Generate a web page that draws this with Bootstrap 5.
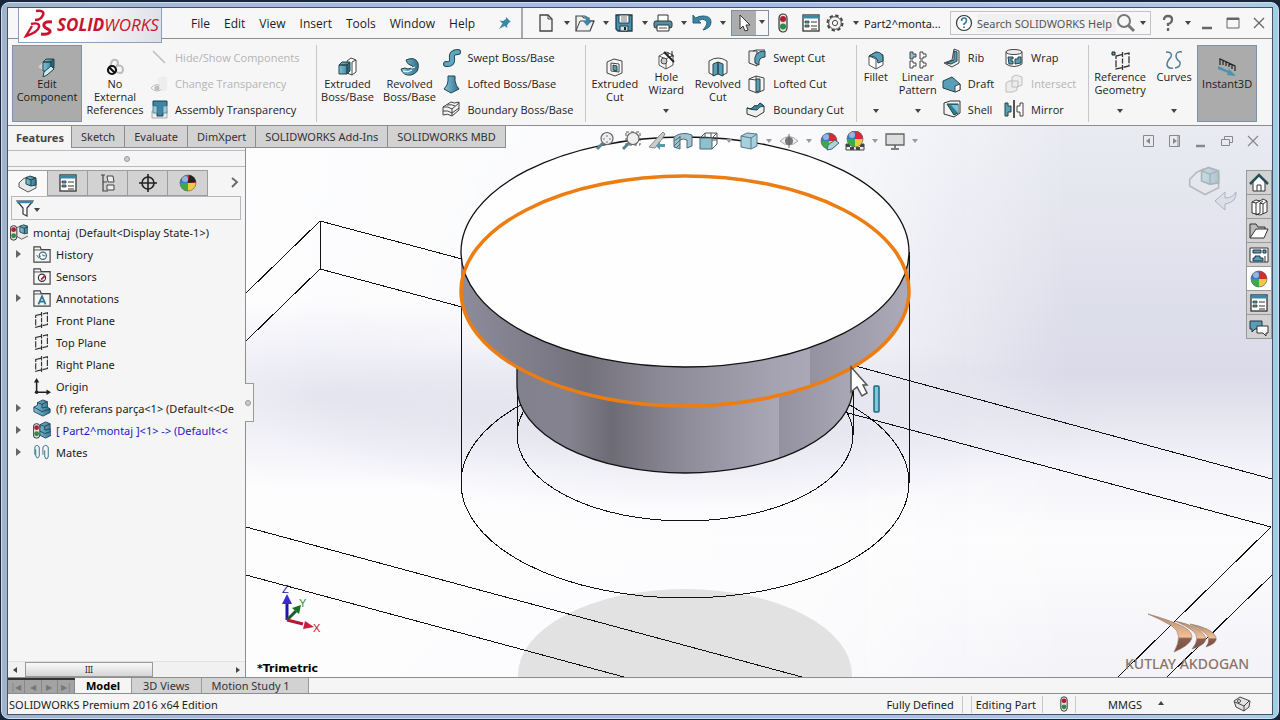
<!DOCTYPE html>
<html lang="en">
<head>
<meta charset="utf-8">
<meta name="viewport" content="width=device-width, initial-scale=1">
<title>SOLIDWORKS Premium 2016</title>
<link href="https://cdn.jsdelivr.net/npm/bootstrap@5.3.0/dist/css/bootstrap.min.css" rel="stylesheet">
<style>
:root{--ink:#1c1c1c;--line:#8b8d92;--face:#f5f5f5;--tab:#d2d2d2;--blue:#5a9db8}
body{font-family:"Open Sans","Noto Sans",sans-serif;font-size:12px;line-height:13px;color:var(--ink);background:#17263a;overflow:hidden}
button,input,select{font:inherit;color:inherit}
button{background:none;border:0;padding:0}
a{color:inherit;text-decoration:none}
svg{flex:none}
.win-frame{padding:4px 5px 3px 5px;margin:2px 1px 1px 1px;min-height:0;border-radius:8px;background:linear-gradient(90deg,#9fb4cc,#a9b9dd 20%,#a5bbe8 60%,#b3c9e6 97%,#9ed0e4);border:1px solid #d3deec}
.win-body{border:1px solid #43536a;background:var(--face);min-height:0}
.title-row{height:31px;border-bottom:1px solid var(--line);background:#f7f7f8;z-index:3}
.brand-box{left:10px;top:0;width:144px;height:35px;background:linear-gradient(100deg,#fff 40%,#dcdfe6);border:1px solid #8ba0bd;border-top:0}
.brand-box svg{margin-left:4px}
.brand-word{font-size:17px;line-height:20px;font-weight:700;font-style:italic;color:#c8142f}
.brand-word span{font-weight:400}
.menu-links{padding-left:183px}
.menu-links a{margin-right:14px}
.quick{border-left:2px solid #a9aaad;padding-left:13px}
.quick .tri{margin-right:1px}
.small-face,.find-box input,.tab-strip,.low-tabs,.status-row,.tree-pane{font-family:"Noto Sans","Open Sans",sans-serif;font-size:11px}
.tri{width:0;height:0;border:3px solid transparent;border-top:4px solid #444;border-bottom:0;display:inline-block}
.tri.up{border-top:0;border-bottom:4px solid #444}
.tri.faint{border-top-color:#999}
.tri.to-left{rotate:90deg}
.tri.to-right{rotate:-90deg}
.sel-tool{border:1px solid #7d8ea4;height:26px}
.sel-tool .on{background:#adadad;width:24px;height:24px}
.sel-tool .more{width:12px}
.find-box{border:1px solid #c0c3c9;background:#f7f7f8;height:24px;width:201px}
.find-box input{border:0;background:#f0f0f1;width:139px;min-width:0;padding:0;color:#555;height:18px}
.find-box input::placeholder{color:#555;opacity:1}
.ribbon-row{height:87px;border-bottom:1px solid var(--line);padding:6px 0 3px 4px;background:#f6f6f7;font-size:11px}
.group{border-right:1px solid #c4c6ca;padding-right:12px}
.tool{display:flex;flex-direction:column;align-items:center;padding-top:12px;text-align:center;position:relative}
.tool.drop{padding-top:5px}
.tool.drop .tri{position:absolute;bottom:9px}
.tool.on{background:#ababab;border:1px solid #7c93ac;padding-top:11px}
.w-a{width:70px}.w-b{width:66px}.w-c{width:62px}.w-d{width:57px}.w-e{width:46px}.w-f{width:38px}.w-g{width:60px}
.pile{display:flex;flex-direction:column}
.pile+.pile{margin-left:10px}
.pile button{display:flex;align-items:center;gap:7px;height:26px;white-space:nowrap}
.off{color:#b4b4b4}.off svg{opacity:.35}
.top-strip{height:22px}
.tab-strip button{height:22px;padding:0 9px;background:var(--tab);border:1px solid var(--line);border-left:0;border-top:0;color:#333}
.tab-strip button.on{background:var(--face);border:0;border-right:1px solid var(--line);font-weight:700;color:#444;padding:0 8px;width:64px}
.heads-up{margin-left:86px;margin-top:5px}
.doc-ctl{margin-top:8px;padding-right:6px}
.stage{min-height:0;background:#fdfdfe}
.scene{inset:0;z-index:0}
.over{z-index:1}
.tree-pane{width:238px;background:var(--face);border-right:1px solid var(--line);z-index:1}
.grip{height:17px;margin-top:2px;border-top:1px solid #b9bbbf;border-bottom:1px solid #b9bbbf}
.dot{width:6px;height:6px;border-radius:50%;background:#ccc;border:1px solid #999}
.pane-tabs{margin-top:3px;height:26px}
.pane-tabs button{width:40px;background:var(--tab);border:1px solid #9b9ca0;border-left:0}
.pane-tabs .on{background:#f9f9fa;border-bottom:0}
.filter-box{height:24px;margin:0 4px 1px 3px;border:1px solid #b6b8bc}
.tree-pane li{height:22px;display:flex;align-items:center;white-space:nowrap;overflow:hidden;margin-right:3px}
.tree-pane li svg{margin-right:5px}
.tree-pane li .root-pic{margin:0 5px 0 2px}
.tree-pane .editing{color:#1c18c4}
.tw{width:25px;padding-left:8px;flex:none;display:flex}
.tw i{border:4px solid transparent;border-left:5px solid #666;border-right:0}
.hbar{height:16px;background:#f1f1f1;border-top:1px solid #e1e1e1}
.thumb{width:128px;height:15px;margin-left:7px;border:1px solid #999;background:linear-gradient(#fafafa,#d5d5d5);font-size:8px}
.pull{left:237px;top:257px;width:9px;height:39px;background:var(--face);border:1px solid #999;border-left:0;z-index:2}
.doc-ctl button,.caption button{width:26px;display:flex;justify-content:center}
.caption .tri{margin:0 3px 0 4px}
.task-pane{right:0;top:44px;width:26px;z-index:1;background:var(--tab);border:1px solid #999;border-bottom:0}
.task-pane button{height:24px;width:100%;display:flex;align-items:center;justify-content:center;border-bottom:1px solid #999}
.view-name{left:249px;bottom:2px;z-index:1;font-weight:700;font-size:11px;font-family:"DejaVu Sans",sans-serif;color:#000}
.low-tabs{height:17px;border-top:1px solid var(--line);border-bottom:1px solid var(--line)}
.low-tabs button{border-right:1px solid #999;background:var(--tab);color:#333;padding:0 11px}
.low-tabs button:last-child{padding:0 18px 0 10px}
.low-tabs button.on{background:var(--face);font-weight:700;color:#000;border-right:1px solid #999}
.reel{width:67px;background:#a3a3a3;border-top:2px solid #333;font-size:8px;color:#777}
.reel span{border-right:1px solid #888;flex:1;text-align:center}
.status-row{height:20px;padding-left:1px}
.cell{border-right:1px solid #c9c9c9;height:17px;display:flex;align-items:center}
.cell-lead{border-left:1px solid #c9c9c9;margin-left:8px;padding:0 6px 0 4px}
.cell-light{padding:0 3px 0 13px}
.tag-pic{margin:0 21px 0 69px}
</style>
</head>
<body class="vh-100 d-flex flex-column">
<svg width="0" height="0" class="position-absolute" aria-hidden="true">
<defs>
<linearGradient id="teal" x1="0" x2="1"><stop offset="0" stop-color="#82c4dc"/><stop offset="1" stop-color="#34718c"/></linearGradient>
<g id="ball"><circle cx="10" cy="10" r="8" fill="#ddd"/><path d="M10 10V2a8 8 0 0 0-8 8z" fill="#3c78c8"/><path d="M10 10V2a8 8 0 0 1 8 8z" fill="#d52b35"/><path d="M10 10H2a8 8 0 0 0 8 8z" fill="#3bab4a"/><path d="M10 10v8a8 8 0 0 0 8-8z" fill="#ecca42"/><circle cx="7" cy="6" r="3" fill="#fff" opacity=".45"/><circle cx="10" cy="10" r="8" fill="none" stroke="#555" stroke-width=".6"/></g>
<g id="light"><rect x="6" y="1" width="8" height="18" rx="4" fill="#e5e5e5" stroke="#333" stroke-width="1.2"/><circle cx="10" cy="6" r="3" fill="#b01f33"/><circle cx="10" cy="13.500" r="3" fill="#2f8a49"/></g>
<g id="box"><path d="M3 6l7-4 7 3v10l-7 4-7-4z" fill="#fff" stroke="#555"/><path d="M3 6l7 3 7-4M10 9v10" fill="none" stroke="#555"/></g>
<g id="cube"><path d="M2 7l3-3h8l-3 3zM2 7h8v9H2z" fill="url(#teal)" stroke="#244"/><path d="M10 7l3-3v9l-3 3z" fill="#2c6680" stroke="#244"/></g>
<g id="plane" fill="none" stroke="#333" stroke-width="1.300"><path d="M3 5l13-3v13L3 18z" stroke-dasharray="7 1.300"/><path d="M9.500 1v18" stroke-dasharray="5 1.500"/></g>
<g id="folder"><path d="M1 2h7l1 3h10v14H1z" fill="#f5f5f5" stroke="#444" stroke-width="1.300"/><path d="M1 5.500h18" stroke="#444"/></g>
<g id="part"><path d="M1 9l4-2V4l6-3 5 2v6l3 2v4l-8 4-10-5z" fill="url(#teal)" stroke="#1e4455"/><path d="M1 9l9 5 9-3M5 4l5 2 6-3M10 6v4l6-1" fill="none" stroke="#1e4455"/></g>
<g id="assy"><path d="M1 9l4-4 4-2 9 3v8l-8 4-9-5z" fill="#e9e9e9" stroke="#555"/><path d="M8 4l4-2 6 2v7l-5 1-5-2z" fill="url(#teal)" stroke="#244"/><path d="M8 4l5 2 5-2M13 6v6" fill="none" stroke="#244"/></g>
<g id="props"><rect x="2" y="2" width="16" height="16" fill="#fff" stroke="#333" stroke-width="1.300"/><path d="M2 4h16" stroke="#3b87a5" stroke-width="3"/><path d="M4 8h4v2H4zM4 12h4v2H4z" fill="#5a9db8" stroke="#333" stroke-width=".8"/><path d="M10 9h6M10 13h6M10 16h6" stroke="#333"/></g>
<g id="mag"><circle cx="12" cy="7.500" r="6" fill="#eee" stroke="#666" stroke-width="1.200"/><path d="M8 12l-6 6" stroke="#5b8290" stroke-width="3"/></g>
<g id="cutbox"><path d="M2 5l7-3 8 2v12l-7 3-8-3z" fill="#f5f5f5" stroke="#444"/></g>
</defs></svg>

<div class="win-frame flex-grow-1 d-flex flex-column">
<div class="win-body flex-grow-1 d-flex flex-column">

<header class="title-row d-flex align-items-center position-relative">
 <div class="brand-box position-absolute d-flex align-items-center">
  <svg width="34" height="32" viewBox="0 0 34 32"><g fill="none" stroke="#c8142f"><path d="M13 2q9-1 7 4t-8 5" stroke-width="2.500"/><path d="M8 15q9-2 8 3T3 27l6-10" stroke-width="2.400"/><path d="M29 13q-9-1-8 4c1 3 7 3 6 6q-2 3-9 2" stroke-width="3"/></g></svg>
  <span class="brand-word">SOLID<span>WORKS</span></span>
 </div>
 <nav class="menu-links d-flex"><a href="#">File</a><a href="#">Edit</a><a href="#">View</a><a href="#">Insert</a><a href="#">Tools</a><a href="#">Window</a><a href="#">Help</a></nav>
 <svg class="ms-2 me-2" width="16" height="16" viewBox="0 0 16 16"><path d="M9 2l5 5-2 .4-2 3 .5 2.600-3-2L2 14l3.500-5.500-3-3 3.500.500 3-2z" fill="#3b87a5"/></svg>
 <div class="quick d-flex align-items-center align-self-stretch gap-1 flex-grow-1">
  <button aria-label="New"><svg width="20" height="20" viewBox="0 0 20 20"><path d="M4 2h8l4 4v12H4z" fill="#f4f4f4" stroke="#444" stroke-width="1.300"/><path d="M12 2v4h4" fill="none" stroke="#444"/></svg></button><i class="tri ms-1"></i>
  <button aria-label="Open"><svg width="20" height="20" viewBox="1 0 20 20"><path d="M2 3h6l2 2h5v3h5l-4 10H2z" fill="#f0f0f0" stroke="#444" stroke-width="1.200"/><path d="M2 18L6 8h14" fill="none" stroke="#444"/><path d="M8 2q7 0 7 6h3l-5 5-4-5h3q0-4-4-6z" fill="#3b87a5"/></svg></button><i class="tri ms-1"></i>
  <button aria-label="Save"><svg width="20" height="20" viewBox="0 0 20 20"><path d="M2 2h16v16H4l-2-2z" fill="#4a93af" stroke="#1f3c4a" stroke-width="1.300"/><path d="M5 2h10v8H5z" fill="#fff" stroke="#1f3c4a"/><path d="M7 4h6M7 6h6M7 8h6" stroke="#777"/><path d="M6 13h8v5H6z" fill="#ddd" stroke="#1f3c4a"/><path d="M11 14v3" stroke="#222" stroke-width="2"/></svg></button><i class="tri ms-1"></i>
  <button aria-label="Print"><svg width="20" height="20" viewBox="0 0 20 20"><path d="M5 8V2h10v6" fill="#fff" stroke="#333"/><rect x="1" y="8" width="18" height="7" rx="2" fill="#4a93af" stroke="#333"/><path d="M4 12h12v6H4z" fill="#fff" stroke="#333"/><path d="M6 15h8" stroke="#555"/></svg></button><i class="tri ms-1"></i>
  <button aria-label="Undo"><svg width="20" height="20" viewBox="0 0 20 20"><path d="M1 2v8h8L6 7.500q5-2.500 8 0t-3 9.500q8-2 8-8t-8-6q-4 0-7.500 2z" fill="#3b87a5" stroke="#285e74"/></svg></button><i class="tri ms-1"></i>
  <div class="sel-tool d-flex"><button class="on" aria-label="Select"><svg width="20" height="20" viewBox="0 0 20 20"><path d="M6 2v14l3-3 2 5 3-1-2-5h4z" fill="#fff" stroke="#333"/></svg></button><button class="more" aria-label="Select options"><i class="tri me-0 mb-1"></i></button></div>
  <button aria-label="Rebuild"><svg width="20" height="20" viewBox="0 0 20 20"><use href="#light"/></svg></button>
  <button class="ms-1" aria-label="File properties"><svg width="20" height="20" viewBox="0 0 20 20"><use href="#props"/></svg></button>
  <button aria-label="Options"><svg width="20" height="20" viewBox="0 0 20 20"><circle cx="10" cy="10" r="7.500" fill="none" stroke="#444" stroke-width="2" stroke-dasharray="3.400 2.490"/><circle cx="10" cy="10" r="6.300" fill="#f4f4f4" stroke="#444"/><circle cx="10" cy="10" r="2.600" fill="#fff" stroke="#444"/></svg></button><i class="tri ms-1"></i>
  <span class="small-face">Part2^monta...</span>
  <label class="find-box d-flex align-items-center ms-auto">
   <svg class="mx-1" width="18" height="18" viewBox="0 0 18 18"><circle cx="9" cy="9" r="7.500" fill="#fff" stroke="#333" stroke-width="1.200"/><path d="M6.500 7q0-3 2.500-3t2.500 2.300T9 10v1M9 12.500V14" fill="none" stroke="#2f7f9d" stroke-width="1.700"/></svg>
   <input type="text" placeholder="Search SOLIDWORKS Help" aria-label="Search SOLIDWORKS Help">
   <svg width="20" height="20" viewBox="0 0 20 20"><circle cx="8" cy="8" r="6" fill="none" stroke="#777" stroke-width="2"/><path d="M12 12l6 6" stroke="#777" stroke-width="3"/></svg><i class="tri me-0 ms-1"></i>
  </label>
  <div class="caption d-flex align-items-center">
   <button aria-label="Help"><svg width="14" height="18" viewBox="0 0 14 18"><path d="M3 6q0-4 4-4t4 3.500T7 10v2M7 14v3" fill="none" stroke="#666" stroke-width="2.300"/></svg></button><i class="tri"></i>
   <button aria-label="Minimize"><svg width="14" height="14"><path d="M2 12h10" stroke="#666" stroke-width="2.500"/></svg></button>
   <button aria-label="Maximize"><svg width="14" height="14"><path d="M1 2h12v10H1z" fill="none" stroke="#666"/><path d="M1 3h12" stroke="#666" stroke-width="2"/></svg></button>
   <button aria-label="Close"><svg width="14" height="14"><path d="M2 2l10 10M12 2L2 12" stroke="#666" stroke-width="1.300"/></svg></button>
  </div>
 </div>
</header>

<section class="ribbon-row d-flex align-items-stretch" aria-label="Features toolbar">
 <div class="group d-flex">
  <button class="tool on w-a"><svg class="pic" width="20" height="20" viewBox="0 0 20 20"><path d="M1 10l5-5v8z" fill="#ddd" opacity=".7"/><g transform="translate(4 -2)"><use href="#cube"/></g><path d="M6 20l1-5 7-6 3 3-7 6z" fill="#cfe9f2" stroke="#244"/></svg>Edit<br>Component</button>
  <button class="tool w-b"><svg class="pic" width="20" height="20" viewBox="0 0 20 20"><path d="M6 8q0-6 5-5 4 2 0 7M11 9q7-2 7 4-1 5-6 2" fill="none" stroke="#bbb" stroke-width="2"/><circle cx="7" cy="13" r="4" fill="#fff" stroke="#111" stroke-width="2.200"/><path d="M4 10l6 6" stroke="#111" stroke-width="2.200"/></svg>No<br>External<br>References</button>
  <div class="pile pe-1">
   <button class="off" disabled><svg width="20" height="20" viewBox="0 0 20 20"><path d="M5 3l12 12" stroke="#555" stroke-width="1.500"/></svg>Hide/Show Components</button>
   <button class="off" disabled><svg width="20" height="20" viewBox="0 0 20 20"><path d="M3 14q6-7 12 0-6 6-12 0z" fill="#fff" stroke="#555"/><circle cx="9" cy="14" r="2.500" fill="#555"/><path d="M9 5l6-3 4 2v12l-4 2" fill="#ddd"/></svg>Change Transparency</button>
   <button><svg width="20" height="20" viewBox="0 0 20 20"><path d="M4 12h15v7H4z" fill="#eee" stroke="#aaa"/><path d="M5 2h14v5h-4v10H9V7H5z" fill="#3b87a5" stroke="#1c3f4e"/><path d="M5 7h4v7H5zM15 7h4v7h-4z" fill="#9ccadb" stroke="#5a8ea2"/></svg>Assembly Transparency</button>
  </div>
 </div>
 <div class="group d-flex">
  <button class="tool w-c"><svg class="pic" width="20" height="20" viewBox="0 0 20 20"><path d="M9 4l4-3 5 2v12l-4 3-5-2z" fill="#fff" stroke="#444"/><path d="M14 5l4-2M14 5v13" stroke="#444"/><use href="#cube" transform="translate(-1 1)"/></svg>Extruded<br>Boss/Base</button>
  <button class="tool w-c"><svg class="pic" width="20" height="20" viewBox="0 0 20 20"><path d="M6 3q9-4 12 3 2 10-7 12Q3 19 1 12l4-1q3 2 6 0 4-2-1-3-3-1-4-5z" fill="url(#teal)" stroke="#244"/><path d="M5 6l7 5 3-1M3 14q5 2 9-1" fill="none" stroke="#fff"/></svg>Revolved<br>Boss/Base</button>
  <div class="pile">
   <button><svg width="20" height="20" viewBox="-1 0 20 20"><path d="M4 16q7 1 6-6-1-6 6-6" fill="none" stroke="#214656" stroke-width="6" stroke-linecap="round"/><path d="M4 16q7 1 6-6-1-6 6-6" fill="none" stroke="#5da7c2" stroke-width="4" stroke-linecap="round"/></svg>Swept Boss/Base</button>
   <button><svg width="20" height="20" viewBox="-1 0 20 20"><path d="M6 2h7v5q1 5 4 8l-8 4-7-4q4-4 4-8z" fill="url(#teal)" stroke="#214656"/></svg>Lofted Boss/Base</button>
   <button><svg width="20" height="20" viewBox="0 0 20 20"><path d="M2 8l8-5q3 2 8 0v8l-7 6q-4-3-9-1z" fill="#f3f3f3" stroke="#444"/><path d="M2 8q5-1 9 2l7-6M11 10v7M6 6q5-1 8 1M2 12q5-1 9 2l7-5" fill="none" stroke="#444"/></svg>Boundary Boss/Base</button>
  </div>
 </div>
 <div class="group d-flex">
  <button class="tool w-d"><svg class="pic" width="20" height="20" viewBox="0 0 20 20"><use href="#cutbox"/><path d="M6 6l8 1v8l-8-1z" fill="#fff" stroke="#444"/><path d="M8 8l4 1v5l-4-1z" fill="#5a9db8" stroke="#244"/></svg>Extruded<br>Cut</button>
  <button class="tool drop w-e"><svg class="pic" width="20" height="20" viewBox="0 0 20 20"><use href="#box"/><circle cx="8" cy="11" r="3" fill="#ccc" stroke="#444"/><path d="M8 2l10 10" stroke="#222" stroke-width="2"/><path d="M12 2v3M16 1v4M18 6h-3" stroke="#222"/></svg>Hole<br>Wizard<i class="tri"></i></button>
  <button class="tool w-d"><svg class="pic" width="20" height="20" viewBox="0 0 20 20"><path d="M1 4q9-6 18 0v12l-4 2-5-9-5 9-4-2z" fill="#f6f6f6" stroke="#444"/><path d="M5 7l5-2v12l-5 2zM15 7l-5-2v12l5 2z" fill="#5a9db8" stroke="#244"/></svg>Revolved<br>Cut</button>
  <div class="pile">
   <button><svg width="20" height="20" viewBox="-1 0 20 20"><path d="M2 3h8v15l-8-3z" fill="#eee" stroke="#444"/><path d="M18 3q-12 0-10 12l4 2q-1-8 6-8z" fill="#5a9db8" stroke="#244"/><path d="M6 3l3-1h9" fill="none" stroke="#444"/></svg>Swept Cut</button>
   <button><svg width="20" height="20" viewBox="-1 0 20 20"><use href="#cutbox"/><path d="M9 5h4v12l-4 1z" fill="#5a9db8" stroke="#244"/><path d="M2 5l7 1M9 5V2" stroke="#444" fill="none"/></svg>Lofted Cut</button>
   <button><svg width="20" height="20" viewBox="0 0 20 20"><path d="M1 9q5 2 7-2 4 1 6-3l4 3v6l-8 5-9-3z" fill="#eee" stroke="#333"/><path d="M1 9q5 2 7-2 4 1 6-3l4 3q-5 0-7 4-5 0-10-2z" fill="#3b87a5" stroke="#244"/></svg>Boundary Cut</button>
  </div>
 </div>
 <div class="group d-flex">
  <button class="tool drop w-f"><svg class="pic" width="20" height="20" viewBox="0 0 20 20"><use href="#box"/><path d="M3 6l7-4q8 0 7 9l-5 2q0-7-9-7z" fill="#5a9db8" stroke="#244"/></svg>Fillet<i class="tri"></i></button>
  <button class="tool drop w-e"><svg class="pic" width="20" height="20" viewBox="0 0 20 20"><g fill="#fff" stroke="#444"><path d="M2 2h3v2h3v3H5v2H2z" fill="#8fc0d2"/><path d="M12 2h3v2h3v3h-3v2h-3zM2 11h3v2h3v3H5v2H2zM12 11h3v2h3v3h-3v2h-3z"/></g></svg>Linear<br>Pattern<i class="tri"></i></button>
  <div class="pile">
   <button><svg width="20" height="20" viewBox="-1 0 20 20"><path d="M12 1l5 2v12l-7 4-8-4 8-3z" fill="#eee" stroke="#444"/><path d="M12 3v9l-8 3 5 1 6-3V4z" fill="#5a9db8" stroke="#244"/></svg>Rib</button>
   <button><svg width="20" height="20" viewBox="-1 0 20 20"><path d="M1 7l9-4 8 7v6l-5 2-12-4z" fill="#5a9db8" stroke="#244"/><path d="M13 12l5-2v6l-5 2z" fill="#fff" stroke="#444"/></svg>Draft</button>
   <button><svg width="20" height="20" viewBox="-1 0 20 20"><path d="M2 4l6-2h10v12l-6 4-10-3z" fill="#f2f2f2" stroke="#333"/><path d="M5 5h11v9l-4 2z" fill="#2e7d91" stroke="#244"/><path d="M9 6h7v8z" fill="#7cc4d4"/></svg>Shell</button>
  </div>
  <div class="pile">
   <button><svg width="20" height="20" viewBox="0 0 20 20"><path d="M2 4v12q8 5 16 0V4" fill="#fff" stroke="#444"/><ellipse cx="10" cy="4" rx="8" ry="2.500" fill="#eee" stroke="#444"/><path d="M4 9h5v2H7v2h2v3H5zM11 11h3V9h3v6l-6 1z" fill="#5a9db8" stroke="#244"/></svg>Wrap</button>
   <button class="off" disabled><svg width="20" height="20" viewBox="0 0 20 20"><path d="M2 9l3-2h3V3l4-2 6 2v8l-5 2v3l-4 2H2z" fill="#ddd" stroke="#555"/><path d="M8 7h6v6H8z" fill="none" stroke="#555"/></svg>Intersect</button>
   <button><svg width="20" height="20" viewBox="0 0 20 20"><path d="M1 4h3v3h3v6H4v4H1z" fill="#5a9db8" stroke="#244"/><path d="M19 4h-3v3h-3v6h3v4h3z" fill="#fff" stroke="#444"/><path d="M10 1v18" stroke="#111" stroke-width="1.400"/></svg>Mirror</button>
  </div>
 </div>
 <div class="d-flex">
  <button class="tool drop w-c"><svg class="pic" width="20" height="20" viewBox="0 0 20 20"><use href="#plane" transform="translate(3 1)"/><path d="M2 2h3v3H2z" fill="#5a9db8" stroke="#222"/></svg>Reference<br>Geometry<i class="tri"></i></button>
  <button class="tool drop w-e"><svg class="pic" width="20" height="20" viewBox="0 0 20 20"><path d="M2 2q7 0 5 5-4 4-4 8 1 4 6 3M18 2q-6-1-6 4 0 3 4 6 1 5-5 6" fill="none" stroke="#4f7f98" stroke-width="1.500"/></svg>Curves<i class="tri"></i></button>
  <button class="tool on w-g"><svg class="pic" width="20" height="20" viewBox="0 0 20 20"><path d="M3 8V2l15 7v5M6 4v4M9 5v4M12 6v4M15 8v4" fill="none" stroke="#222" stroke-width="1.200"/><path d="M1 9l11 5-1-3 8 8-9-1 1-2L1 12z" fill="#4a93af"/></svg>Instant3D</button>
 </div>
</section>

<main class="stage flex-grow-1 position-relative d-flex flex-column">
 <svg class="scene position-absolute w-100 h-100" viewBox="8 126 1264 551" preserveAspectRatio="xMinYMin slice" role="img" aria-label="Model view">
  <defs>
   <linearGradient id="sky" x1="0" y1="0" x2="0" y2="1"><stop offset="0" stop-color="#e9ebf1"/><stop offset=".45" stop-color="#dadae9"/><stop offset=".62" stop-color="#f3f3f9"/><stop offset=".75" stop-color="#fcfcfd"/><stop offset="1" stop-color="#f3f3f8"/></linearGradient>
   <linearGradient id="fade" x1="0" x2="1"><stop offset="0" stop-color="#fff" stop-opacity="0"/><stop offset=".55" stop-color="#fff" stop-opacity=".15"/><stop offset=".8" stop-color="#fff" stop-opacity="1"/></linearGradient>
   <mask id="m"><rect x="246" y="126" width="1026" height="551" fill="url(#fade)"/></mask>
   <radialGradient id="haze"><stop offset="0" stop-color="#d6d6e8"/><stop offset="1" stop-color="#d6d6e8" stop-opacity="0"/></radialGradient>
   <linearGradient id="steelA" gradientUnits="userSpaceOnUse" x1="461" x2="909" y1="0" y2="0"><stop offset="0" stop-color="#8e8c9b"/><stop offset=".28" stop-color="#73717c"/><stop offset=".45" stop-color="#8d8a97"/><stop offset=".7" stop-color="#a5a2b1"/><stop offset=".78" stop-color="#aaa7b6"/><stop offset=".78" stop-color="#9491a0"/><stop offset="1" stop-color="#adabb9"/></linearGradient>
   <linearGradient id="steelB" gradientUnits="userSpaceOnUse" x1="517" x2="853" y1="0" y2="0"><stop offset="0" stop-color="#82808d"/><stop offset=".15" stop-color="#85838f"/><stop offset=".28" stop-color="#6d6b75"/><stop offset=".5" stop-color="#8f8c9a"/><stop offset=".78" stop-color="#aaa7b7"/><stop offset=".78" stop-color="#93909f"/><stop offset="1" stop-color="#aaa7b6"/></linearGradient>
   <linearGradient id="bronze" x1="0" y1="0" x2="0" y2="1"><stop offset="0" stop-color="#b58a6d"/><stop offset=".6" stop-color="#f0c196"/><stop offset=".65" stop-color="#8b5f4d"/><stop offset="1" stop-color="#76503d"/></linearGradient>
  </defs>
  <rect x="8" y="126" width="1264" height="551" fill="#fdfdfe"/>
  <rect x="246" y="126" width="1026" height="551" fill="url(#sky)" mask="url(#m)"/>
  <ellipse cx="330" cy="395" rx="340" ry="95" fill="url(#haze)" opacity=".6"/>
  <ellipse cx="690" cy="420" rx="420" ry="90" fill="url(#haze)" opacity=".8"/>
  <ellipse cx="685" cy="675" rx="167" ry="86" fill="#e2e2e3"/>
  <g fill="none" stroke="#111" shape-rendering="crispEdges">
   <path d="M246 293l74-72 142 38M320 221v48M246 341l74-72 142 38M848 364l424 115M848 413l423 114-153 150M1272 575l-105 102M246 527l556 150M246 575l378 102"/>
   <ellipse cx="685" cy="483" rx="224" ry="115"/><ellipse cx="685" cy="435" rx="168" ry="86"/>
   <path d="M461 252v231M909 252v231M517 387v48M853 387v48"/>
  </g>
  <path d="M517 340v47a168 86 0 0 0 336 0v-47z" fill="url(#steelB)" stroke="#111" stroke-width="1.300"/>
  <path d="M461 252v39a224 115 0 0 0 448 0v-39z" fill="url(#steelA)"/>
  <ellipse cx="685" cy="252" rx="224" ry="115" fill="#fefefe" stroke="#111" stroke-width="1.300"/>
  <ellipse cx="685" cy="291" rx="224" ry="115" fill="none" stroke="#ec7d13" stroke-width="3.500"/>
  <path d="M851 367v25l6-5 5 9 5-3-4-8h4z" fill="#fff" stroke="#555" stroke-width="1.500"/>
  <rect x="874" y="386" width="5" height="26" rx="1" fill="#7fc9dd" stroke="#1c6580" stroke-width="1.500"/>
  <g stroke-width="3" fill="none"><path d="M287 620v-18" stroke="#2112a8"/><path d="M287 620l9-9" stroke="#1b5c2a"/><path d="M287 620l16 4" stroke="#b31631"/></g>
  <path d="M287 594l5 10h-10z" fill="#3b2bd2"/><path d="M301 605l-2 9-7-6z" fill="#137324"/><path d="M314 627l-11 2 2-8z" fill="#c3203c"/>
  <g font-family="Liberation Sans, sans-serif" font-size="11"><text x="282" y="593" fill="#2112a8">Z</text><text x="299" y="607" fill="#2d9440">Y</text><text x="313" y="632" fill="#b31631">X</text></g>
  <g fill="url(#bronze)" stroke="#8d7568" stroke-width=".6"><path d="M1148 614q22 6 36 13 20 12-10 25 10-18-2-26-12-7-24-12z"/><path d="M1175 621q24 5 30 15 4 8-13 13 9-11 1-18-8-6-18-10z"/><path d="M1190 624q22 4 26 13 2 6-10 10 6-9-1-14-6-5-15-9z"/></g>
  <text x="1125" y="669" font-family="Noto Sans, sans-serif" font-size="14" font-weight="500" fill="#8b7469">KUTLAY AKDOGAN</text>
  <g opacity=".3" transform="translate(1188 164) scale(1.700)"><use href="#assy"/></g>
  <path d="M1215 201l10-9v6q8 0 11-6 1 10-11 12v6z" fill="#dcdfe8" stroke="#aeb2c0"/>
 </svg>

 <div class="top-strip d-flex align-items-start over">
  <div class="tab-strip d-flex" role="tablist">
   <button class="on" role="tab">Features</button><button role="tab">Sketch</button><button role="tab">Evaluate</button><button role="tab">DimXpert</button><button role="tab">SOLIDWORKS Add-Ins</button><button role="tab">SOLIDWORKS MBD</button>
  </div>
  <div class="heads-up d-flex align-items-center" role="toolbar" aria-label="View">
   <button aria-label="Zoom to fit"><svg width="26" height="20" viewBox="-3 0 26 20"><use href="#mag"/><path d="M12 4v8M8 8h8" stroke="#777" stroke-dasharray="2 4"/></svg></button>
   <button aria-label="Zoom to area"><svg width="26" height="20" viewBox="-3 0 26 20"><path d="M5 1h14v13H5z" fill="none" stroke="#555" stroke-dasharray="3 2"/><use href="#mag"/></svg></button>
   <button aria-label="Previous view"><svg width="26" height="20" viewBox="-3 0 26 20"><path d="M2 16L13 4l3-3 2 2-3 5-7 9z" fill="#ccc" stroke="#888"/><path d="M18 13h-5v-3l-4 5 4 4v-3h5z" fill="#5b98a8"/></svg></button>
   <button aria-label="Section view"><svg width="26" height="20" viewBox="-3 0 26 20"><path d="M1 6q8-6 18-2v11l-5 2V9q-4-2-7 0v9l-6-2z" fill="#a5c3cf" stroke="#456b79"/><path d="M1 10l6-4M1 15l6-6M3 17l4-4M7 5v4" stroke="#456b79"/></svg></button>
   <button aria-label="View orientation"><svg width="26" height="20" viewBox="-3 0 26 20"><path d="M1 7h12v11H1z" fill="#8ec0d0" stroke="#456b79"/><path d="M1 7l5-5h12v11l-5 5M6 2v5M13 7l5-5M12 2v5M13 9h5" fill="none" stroke="#555"/></svg></button><i class="tri faint mx-1"></i>
   <button aria-label="Display style"><svg width="26" height="20" viewBox="-3 0 26 20"><path d="M2 5l6-3 10 1v12l-6 3-10-2z" fill="#a5d0de" stroke="#5b7883"/><path d="M2 5l10 2v11M12 7l6-4" fill="none" stroke="#5b7883"/></svg></button><i class="tri faint mx-1"></i>
   <button aria-label="Hide or show items"><svg width="26" height="20" viewBox="-3 0 26 20"><path d="M1 10q9-9 18 0-9 8-18 0z" fill="#eee" stroke="#aaa"/><circle cx="10" cy="10" r="4" fill="#777"/><path d="M10 3v14" stroke="#666"/></svg></button><i class="tri faint mx-1"></i>
   <button aria-label="Edit appearance"><svg width="26" height="20" viewBox="-3 0 26 20"><use href="#ball"/><path d="M8 19l1-5 7-5 4 3-7 6z" fill="#a9d4da" stroke="#456b79"/></svg></button>
   <button aria-label="Apply scene"><svg width="26" height="20" viewBox="-3 0 26 20"><path d="M1 13h18v6H1z" fill="#eee" stroke="#444"/><path d="M1 13h4v3H1zM5 16h4v3H5zM11 16h4v3h-4zM15 13h4v3h-4z" fill="#444"/><use href="#ball" transform="translate(0 -2)"/></svg></button><i class="tri faint mx-1"></i>
   <button aria-label="View settings"><svg width="26" height="20" viewBox="-3 0 26 20"><path d="M1 3h18v11H1z" fill="#ddd" stroke="#666" stroke-width="1.300"/><path d="M10 14v3M6 18h8" stroke="#555" stroke-width="1.500"/></svg></button><i class="tri faint mx-1"></i>
  </div>
  <div class="doc-ctl d-flex ms-auto align-items-center">
   <button aria-label="Collapse left"><svg width="14" height="14"><path d="M1.500 1.500h10v11h-10z" fill="none" stroke="#888"/><path d="M8 4v6L4 7z" fill="#888"/></svg></button>
   <button aria-label="Collapse right"><svg width="14" height="14"><path d="M1.500 1.500h10v11h-10zM10 2v10" fill="none" stroke="#888"/><path d="M5 4v6l4-3z" fill="#888"/></svg></button>
   <button aria-label="Minimize document"><svg width="14" height="14"><path d="M2 12h9" stroke="#888" stroke-width="2.500"/></svg></button>
   <button aria-label="Restore document"><svg width="14" height="14"><path d="M1.500 5.500h8v6h-8zM4.500 5V2.500h8v6H10" fill="none" stroke="#888"/></svg></button>
   <button aria-label="Close document"><svg width="14" height="14"><path d="M2 2l10 10M12 2L2 12" stroke="#888" stroke-width="1.200"/></svg></button>
  </div>
 </div>

 <aside class="tree-pane flex-grow-1 d-flex flex-column">
  <div class="grip d-flex align-items-center justify-content-center"><span class="dot"></span></div>
  <div class="pane-tabs d-flex">
   <button class="on" aria-label="Design tree"><svg width="20" height="20" viewBox="0 0 20 20"><use href="#assy"/></svg></button>
   <button aria-label="Property manager"><svg width="20" height="20" viewBox="0 0 20 20"><use href="#props"/></svg></button>
   <button aria-label="Configurations"><svg width="20" height="20" viewBox="0 0 20 20"><path d="M3 2h4M5 2v16h5M5 9h4" fill="none" stroke="#444" stroke-width="1.200"/><path d="M9 3h6l1 6h-6zM9 12h7v5h-7z" fill="#eee" stroke="#444"/></svg></button>
   <button aria-label="DimXpert manager"><svg width="20" height="20" viewBox="0 0 20 20"><circle cx="10" cy="10" r="6" fill="none" stroke="#222" stroke-width="1.600"/><path d="M10 1v18M1 10h18" stroke="#222" stroke-width="1.600"/></svg></button>
   <button aria-label="Display manager"><svg width="20" height="20" viewBox="0 0 20 20"><use href="#ball"/><path d="M10 10l1-8q6 1 7 7z" fill="#222"/></svg></button>
   <svg class="ms-auto me-1 mt-1" width="12" height="16" viewBox="0 0 12 16"><path d="M3 4l5 4-5 5" fill="none" stroke="#666" stroke-width="1.800"/></svg>
  </div>
  <div class="filter-box d-flex align-items-center ps-1"><svg width="18" height="20" viewBox="0 0 18 20"><path d="M1 3h16l-6 7v8l-4-2v-6z" fill="#fff" stroke="#333" stroke-width="1.200"/><path d="M1 4h16" stroke="#3b87a5" stroke-width="2.500"/></svg><i class="tri mt-1"></i></div>
  <ul class="list-unstyled mb-0">
   <li><svg class="root-pic" width="18" height="18" viewBox="0 0 20 20"><use href="#assy" transform="translate(3 0)"/><use href="#light" transform="translate(-5 2) scale(.9)"/></svg>montaj&nbsp; (Default&lt;Display State-1&gt;)</li>
   <li><span class="tw"><i></i></span><svg width="18" height="18" viewBox="0 0 20 20"><use href="#folder"/><circle cx="11" cy="12" r="4" fill="#fff" stroke="#3b6d82" stroke-width="1.300"/><path d="M11 10v2h3M4 11l2 3 3-2" fill="none" stroke="#3b6d82"/></svg>History</li>
   <li><span class="tw"></span><svg width="18" height="18" viewBox="0 0 20 20"><use href="#folder"/><circle cx="10" cy="12" r="4" fill="#fff" stroke="#333" stroke-width="1.300"/><path d="M9 14l4-4" stroke="#b01f33" stroke-width="2"/></svg>Sensors</li>
   <li><span class="tw"><i></i></span><svg width="18" height="18" viewBox="0 0 20 20"><use href="#folder"/><path d="M6 17l4-9 4 9M7.500 14h5" fill="none" stroke="#2f7590" stroke-width="1.900"/></svg>Annotations</li>
   <li><span class="tw"></span><svg width="18" height="18" viewBox="0 0 20 20"><use href="#plane"/></svg>Front Plane</li>
   <li><span class="tw"></span><svg width="18" height="18" viewBox="0 0 20 20"><use href="#plane"/></svg>Top Plane</li>
   <li><span class="tw"></span><svg width="18" height="18" viewBox="0 0 20 20"><use href="#plane"/></svg>Right Plane</li>
   <li><span class="tw"></span><svg width="18" height="18" viewBox="0 0 20 20"><path d="M4 4v13h12" fill="none" stroke="#222" stroke-width="1.700"/><path d="M4 1l3 5H1zM20 17l-5-3v6z" fill="#222"/><circle cx="4" cy="17" r="2" fill="#222"/></svg>Origin</li>
   <li><span class="tw"><i></i></span><svg width="18" height="18" viewBox="0 0 20 20"><use href="#part"/></svg>(f) referans parça&lt;1&gt; (Default&lt;&lt;De</li>
   <li class="editing"><span class="tw"><i></i></span><svg width="18" height="18" viewBox="0 0 20 20"><use href="#part" transform="translate(3 0)"/><use href="#light" transform="translate(-5 2) scale(.9)"/></svg>[ Part2^montaj ]&lt;1&gt; -&gt; (Default&lt;&lt;</li>
   <li><span class="tw"><i></i></span><svg width="18" height="18" viewBox="0 0 20 20"><path d="M2 13V5q2-5 5 0v9q-2 5-4 0V7M11 13V5q3-5 6 0v10q-2 5-4 0V8" fill="none" stroke="#5588a0" stroke-width="1.300"/></svg>Mates</li>
  </ul>
  <div class="hbar mt-auto d-flex align-items-center px-1"><i class="tri to-left"></i><div class="thumb text-center">III</div><i class="tri to-right ms-auto"></i></div>
 </aside>
 <div class="pull position-absolute d-flex align-items-center"><span class="dot"></span></div>
 <div class="view-name position-absolute">*Trimetric</div>
 <nav class="task-pane position-absolute" aria-label="Task pane">
  <button aria-label="Home"><svg width="20" height="20" viewBox="0 0 20 20"><path d="M4 9v9h12V9l-6-6z" fill="#fff" stroke="#333"/><path d="M1 11l9-9 9 9" fill="none" stroke="#264d5c" stroke-width="2.500"/><path d="M8 18v-6h4v6" fill="none" stroke="#333"/></svg></button>
  <button aria-label="Design library"><svg width="20" height="20" viewBox="0 0 20 20"><path d="M3 5l4-2 4 1 3-2 4 2v11l-7 3-8-2z" fill="#fff" stroke="#333"/><path d="M3 5l4 1 4-2M7 6v12l4-2V6l3-2M11 6l3 1 4-3M14 7v10" fill="none" stroke="#333"/></svg></button>
  <button aria-label="File explorer"><svg width="20" height="20" viewBox="0 0 20 20"><path d="M1 17V3h6l2 3h7v2" fill="#bbb" stroke="#333"/><path d="M1 17L7 8h12l-4 9z" fill="#fff" stroke="#333"/></svg></button>
  <button aria-label="View palette"><svg width="20" height="20" viewBox="0 0 20 20"><path d="M1 3h18v14H1z" fill="#fff" stroke="#333"/><path d="M4 5h8v3H4zM14 5h3v3h-3zM6 11h5v2h3v3H4v-3h2z" fill="#5a9db8" stroke="#234"/><path d="M16 11v6" stroke="#333"/></svg></button>
  <button class="bg-white" aria-label="Appearances"><svg width="20" height="20" viewBox="0 0 20 20"><use href="#ball"/></svg></button>
  <button aria-label="Custom properties"><svg width="20" height="20" viewBox="0 0 20 20"><use href="#props"/></svg></button>
  <button aria-label="Forum"><svg width="20" height="20" viewBox="0 0 20 20"><path d="M1 4h12v8H6l-3 3v-3H1z" fill="#5a9db8" stroke="#234"/><path d="M8 9h11v7h-2v3l-3-3H8z" fill="#fff" stroke="#333"/></svg></button>
 </nav>
</main>

<div class="low-tabs d-flex">
 <div class="reel d-flex" aria-hidden="true"><span>|◀</span><span>◀</span><span>▶</span><span>▶|</span></div>
 <button class="on">Model</button><button>3D Views</button><button>Motion Study 1</button>
</div>
<footer class="status-row d-flex align-items-center">
 <span>SOLIDWORKS Premium 2016 x64 Edition</span>
 <div class="cell ms-auto pe-2">Fully Defined</div><div class="cell cell-lead">Editing Part</div>
 <div class="cell cell-light"><svg width="16" height="16" viewBox="0 0 20 20"><use href="#light"/></svg></div>
 <label class="ps-4 ms-2" for="units">MMGS</label><button id="units" class="ms-3 lh-1" aria-label="Unit system"><i class="tri up mb-1"></i></button>
 <svg class="tag-pic" width="18" height="16" viewBox="0 0 18 16"><path d="M1 5l6-4 10 4-1 6-5 4-8-4z" fill="#e4e4e4" stroke="#444"/><path d="M2 6l9 4 5-5M11 10v5" fill="none" stroke="#444"/><circle cx="6" cy="5" r="1.500" fill="#fff" stroke="#444"/></svg>
</footer>
</div></div>
<script src="https://cdn.jsdelivr.net/npm/bootstrap@5.3.0/dist/js/bootstrap.bundle.min.js"></script>
</body>
</html>
